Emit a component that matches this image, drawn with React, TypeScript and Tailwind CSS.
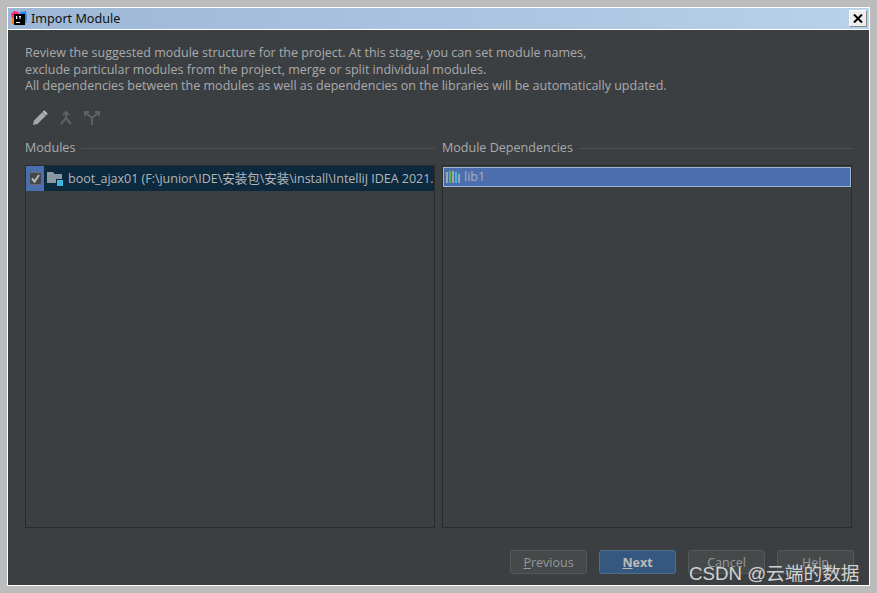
import React from "react";

const font = { fontFamily: '"Open Sans","Noto Sans CJK SC",sans-serif' };

function Btn({ first, rest, primary }: { first: string; rest: string; primary?: boolean }) {
  return (
    <div
      className={
        "w-[77px] h-[24px] rounded-[3px] border flex items-center justify-center text-[12.5px] pt-[2px] " +
        (primary
          ? "bg-[#365880] border-[#4c708c] text-[#bbbbbb] font-bold"
          : "bg-[#45494a] border-[#555859] text-[#96999a]")
      }
    >
      <span className="underline">{first}</span>
      {rest}
    </div>
  );
}

export default function App() {
  return (
    <div className="relative w-[877px] h-[593px] bg-[#bcbcbc] p-[7px] overflow-hidden" style={font}>
      <div className="h-full flex flex-col bg-white p-px">
        <div className="h-[21px] shrink-0 flex items-center bg-gradient-to-r from-[#9db8d6] via-[#a9c3e0] to-[#b8d2ea] pl-[3px] pr-[2px]">
          <svg width="16" height="16" viewBox="0 0 16 16" className="mr-[4px] shrink-0">
            <path d="M0 3 L3 0 L8 1 L8 6 L3 8 L1 7 Z" fill="#ff2f7e" />
            <path d="M9 1 L15 0 L16 6 L15 12 L9 13 Z" fill="#1f8cf0" />
            <path d="M1 6 L4 13 L1 13 Z" fill="#f97a12" />
            <rect x="3" y="3" width="11" height="11" fill="#000" />
            <rect x="5" y="11" width="4" height="1" fill="#fff" />
            <rect x="5" y="5" width="1.2" height="3" fill="#fff" />
            <rect x="8" y="5" width="2" height="1" fill="#fff" />
            <rect x="8.5" y="5" width="1" height="3" fill="#fff" />
          </svg>
          <span className="text-[12.6px] text-[#111] leading-none pt-[2px]" style={{ fontFamily: '"Noto Sans",sans-serif' }}>Import Module</span>
          <div className="ml-auto w-[18px] h-[17px] bg-[#eeeeee] border border-[#fff] border-r-[#888] border-b-[#888] flex items-center justify-center">
            <svg width="10" height="9" viewBox="0 0 10 9">
              <path d="M1 0.5 L9 8.5 M9 0.5 L1 8.5" stroke="#000" strokeWidth="2" />
            </svg>
          </div>
        </div>
        <div className="h-px shrink-0 bg-white" />
        <div className="flex-1 min-h-0 bg-[#3c3f41] flex flex-col px-[17px] text-[#a9abad]">
          <div className="pt-[15px] text-[12.53px] leading-[16.5px] h-[65px] shrink-0">
            <p>Review the suggested module structure for the project. At this stage, you can set module names,</p>
            <p>exclude particular modules from the project, merge or split individual modules.</p>
            <p>All dependencies between the modules as well as dependencies on the libraries will be automatically updated.</p>
          </div>
          <div className="h-[24px] mt-[11px] shrink-0 flex items-center gap-[10px] pl-[7px]">
            <svg width="16" height="16" viewBox="0 0 16 16">
              <path d="M1 15 L2 10.5 L10.5 2 L14 5.5 L5.5 14 Z" fill="#a5a7a9" />
              <path d="M11.5 1 L15 4.5" stroke="#c6c6c6" strokeWidth="2" />
            </svg>
            <svg width="16" height="16" viewBox="0 0 16 16" fill="none" stroke="#5e6163" strokeWidth="2">
              <path d="M8 2 V8 L3 14 M8 8 L13 14 M5 5 L8 2 L11 5" />
            </svg>
            <svg width="16" height="16" viewBox="0 0 16 16" fill="none" stroke="#5e6163" strokeWidth="2">
              <path d="M8 15 V8 L2 3 M8 8 L14 3 M1 6 V2 H5 M11 2 H15 V6" />
            </svg>
          </div>
          <div className="flex gap-[7px] flex-1 min-h-0 mt-[8px]">
            <div className="w-[410px] flex flex-col">
              <div className="h-[20px] shrink-0 flex items-center gap-[6px] text-[12.55px]">
                <span>Modules</span>
                <div className="flex-1 h-px bg-[#515151]" />
              </div>
              <div className="flex-1 mt-[7px] border border-[#2b2b2b] bg-[#3c3f41]">
                <div className="h-[25px] flex items-center bg-[#0d293e] text-[12.55px] text-[#b4b6b8] overflow-hidden whitespace-nowrap">
                  <div className="w-[18px] h-full bg-[#4b6eaf] flex items-center justify-center shrink-0">
                    <div className="w-[13px] h-[13px] bg-[#43494a] border border-[#6b6b6b] rounded-[2px] flex items-center justify-center">
                      <svg width="11" height="11" viewBox="0 0 11 11" fill="none" stroke="#b9b9b9" strokeWidth="2">
                        <path d="M2 5.5 L4.5 8.5 L9 2" />
                      </svg>
                    </div>
                  </div>
                  <svg width="17" height="17" viewBox="0 0 17 17" className="ml-[3px] mr-[4px] shrink-0">
                    <path d="M0 2 H6 L7.5 4 H15 V13 H0 Z" fill="#8a9aa5" />
                    <rect x="9" y="9" width="7" height="6" fill="#0d293e" />
                    <rect x="10" y="10" width="6" height="6" fill="#40b6e0" />
                  </svg>
                  <span className="tracking-[-0.04px] pt-px">boot_ajax01 (F:\junior\IDE\安装包\安装\install\IntelliJ IDEA 2021.</span>
                </div>
              </div>
            </div>
            <div className="flex-1 flex flex-col">
              <div className="h-[20px] shrink-0 flex items-center gap-[6px] text-[12.55px]">
                <span>Module Dependencies</span>
                <div className="flex-1 h-px bg-[#515151]" />
              </div>
              <div className="flex-1 mt-[7px] border border-[#2b2b2b] bg-[#3c3f41] pt-px">
                <div className="h-[20px] flex items-center bg-[#4b6eaf] border border-[#a0b4d4] text-[12.55px] text-[#a9b0bb]">
                  <svg width="16" height="14" viewBox="0 0 16 14" className="ml-[1px] mr-[3px]">
                    <rect x="1" y="2" width="2" height="11" fill="#9aa7b0" />
                    <rect x="4" y="1" width="2" height="12" fill="#62b543" />
                    <rect x="7" y="1" width="2" height="12" fill="#9aa7b0" />
                    <rect x="10" y="2" width="2" height="11" fill="#40b6e0" />
                    <rect x="13" y="4" width="2" height="9" fill="#9aa7b0" />
                  </svg>
                  <span className="pt-px">lib1</span>
                </div>
              </div>
            </div>
          </div>
          <div className="h-[57px] shrink-0 flex items-start justify-end gap-[12px] pt-[22px] -mr-[2px]">
            <Btn first="P" rest="revious" />
            <Btn first="N" rest="ext" primary />
            <Btn first="" rest="Cancel" />
            <Btn first="" rest="Help" />
          </div>
        </div>
      </div>
      <div
        className="absolute left-[689px] top-[561px] text-[18.7px] leading-[25px] text-[#d2d2d2] whitespace-nowrap"
        style={{ fontFamily: '"Liberation Sans","Noto Sans CJK SC",sans-serif' }}
      >
        CSDN @云端的数据
      </div>
    </div>
  );
}
